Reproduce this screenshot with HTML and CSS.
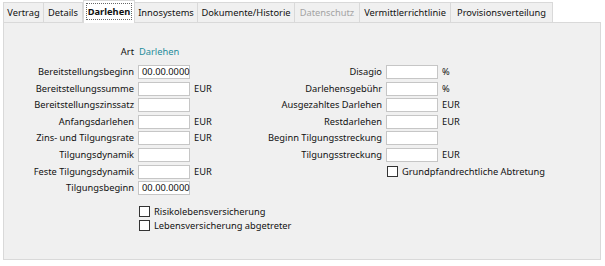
FILE: index.html
```html
<!DOCTYPE html>
<html lang="de">
<head>
<meta charset="utf-8">
<title>Darlehen</title>
<link rel="stylesheet" href="styles.css">
</head>
<body>
<div class="tabs">
  <div class="tab t-vertrag">Vertrag</div>
  <div class="tab t-details">Details</div>
  <div class="tab active t-darlehen"><span class="focus">Darlehen</span></div>
  <div class="tab t-inno">Innosystems</div>
  <div class="tab t-doku">Dokumente/Historie</div>
  <div class="tab disabled t-daten">Datenschutz</div>
  <div class="tab t-verm">Vermittlerrichtlinie</div>
  <div class="tab t-prov">Provisionsverteilung</div>
</div>
<div class="panel">
  <div class="cols">
    <div class="col-left">
      <div class="row-art">
        <span class="lbl">Art</span><span class="art-val">Darlehen</span>
      </div>
      <div class="form left">
        <span class="lbl">Bereitstellungsbeginn</span><span class="inp">00.00.0000</span><span class="unit"></span>
        <span class="lbl">Bereitstellungssumme</span><span class="inp"></span><span class="unit">EUR</span>
        <span class="lbl">Bereitstellungszinssatz</span><span class="inp"></span><span class="unit"></span>
        <span class="lbl">Anfangsdarlehen</span><span class="inp"></span><span class="unit">EUR</span>
        <span class="lbl">Zins- und Tilgungsrate</span><span class="inp"></span><span class="unit">EUR</span>
        <span class="lbl">Tilgungsdynamik</span><span class="inp"></span><span class="unit"></span>
        <span class="lbl">Feste Tilgungsdynamik</span><span class="inp"></span><span class="unit">EUR</span>
        <span class="lbl">Tilgungsbeginn</span><span class="inp">00.00.0000</span><span class="unit"></span>
      </div>
      <div class="checks">
        <div class="check"><span class="box"></span><span>Risikolebensversicherung</span></div>
        <div class="check"><span class="box"></span><span>Lebensversicherung abgetreter</span></div>
      </div>
    </div>
    <div class="col-right">
      <div class="form right">
        <span class="lbl">Disagio</span><span class="inp"></span><span class="unit">%</span>
        <span class="lbl">Darlehensgebühr</span><span class="inp"></span><span class="unit">%</span>
        <span class="lbl">Ausgezahltes Darlehen</span><span class="inp"></span><span class="unit">EUR</span>
        <span class="lbl">Restdarlehen</span><span class="inp"></span><span class="unit">EUR</span>
        <span class="lbl">Beginn Tilgungsstreckung</span><span class="inp"></span><span class="unit"></span>
        <span class="lbl">Tilgungsstreckung</span><span class="inp"></span><span class="unit">EUR</span>
        <div class="check span"><span class="box"></span><span>Grundpfandrechtliche Abtretung</span></div>
      </div>
    </div>
  </div>
</div>
</body>
</html>
```
FILE: styles.css
```css
html, body {
  margin: 0;
  padding: 0;
  background: #ffffff;
}
body {
  font-family: "Noto Sans", "Open Sans", sans-serif;
  font-size: 9.3px;
  color: #111111;
  width: 605px;
  height: 266px;
  overflow: hidden;
}
.tabs {
  display: flex;
  align-items: flex-end;
  height: 22px;
  margin-left: 3px;
}
.tab {
  height: 20px;
  box-sizing: border-box;
  display: flex;
  align-items: center;
  justify-content: center;
  background: #f0f0f0;
  border: 1px solid #d9d9d9;
  border-bottom: none;
  border-left: none;
  white-space: nowrap;
  color: #111111;
}
.tab:first-child {
  border-left: 1px solid #d9d9d9;
}
.t-vertrag { width: 41px; }
.t-details { width: 39px; }
.t-darlehen { width: 52px; }
.t-inno { width: 63px; }
.t-doku { width: 97px; }
.t-daten { width: 65px; }
.t-verm { width: 91px; }
.t-prov { width: 102px; }
.tab.active {
  height: 23px;
  margin-bottom: -1px;
  position: relative;
  z-index: 1;
  background: #ffffff;
  font-weight: bold;
  border-left: 1px solid #d9d9d9;
  padding: 2px 2px 3px;
  align-items: stretch;
}
.tab.active .focus {
  flex: 1;
  display: flex;
  align-items: center;
  justify-content: center;
  border: 1px dotted #666;
}
.tab.disabled {
  color: #a3a3a3;
}
.panel {
  margin: 0 4px 0 3px;
  height: 238px;
  box-sizing: border-box;
  border: 1px solid #d9d9d9;
  background: #f0f0f0;
  padding-top: 22px;
}
.cols {
  display: flex;
  align-items: flex-start;
}
.col-left {
  width: 220px;
}
.col-right {
  padding-top: 20px;
}
.row-art,
.form.left {
  display: grid;
  grid-template-columns: 130px 52px 30px;
  column-gap: 4px;
}
.form.right {
  display: grid;
  grid-template-columns: 158px 52px 30px;
  column-gap: 4px;
}
.row-art {
  height: 14px;
  margin-bottom: 6px;
  align-items: center;
}
.form {
  grid-auto-rows: 14px;
  row-gap: 2.6px;
  align-items: center;
}
.lbl {
  text-align: right;
  white-space: nowrap;
  line-height: 14px;
}
.art-val {
  grid-column: 2 / 4;
  color: #1f8c9b;
  line-height: 14px;
  padding-left: 1px;
}
.inp {
  height: 14px;
  box-sizing: border-box;
  background: #ffffff;
  border: 1px solid #c6c6c6;
  padding-left: 3px;
  line-height: 12px;
  color: #111111;
}
.unit {
  line-height: 14px;
  white-space: nowrap;
}
.checks {
  margin-top: 9px;
  margin-left: 135px;
  display: flex;
  flex-direction: column;
}
.check {
  height: 14px;
  display: flex;
  align-items: center;
  gap: 4px;
  white-space: nowrap;
}
.check.span {
  grid-column: 2 / 4;
  padding-left: 1px;
}
.box {
  width: 11px;
  height: 11px;
  box-sizing: border-box;
  border: 1px solid #333333;
  background: #ffffff;
  flex: none;
}
```
